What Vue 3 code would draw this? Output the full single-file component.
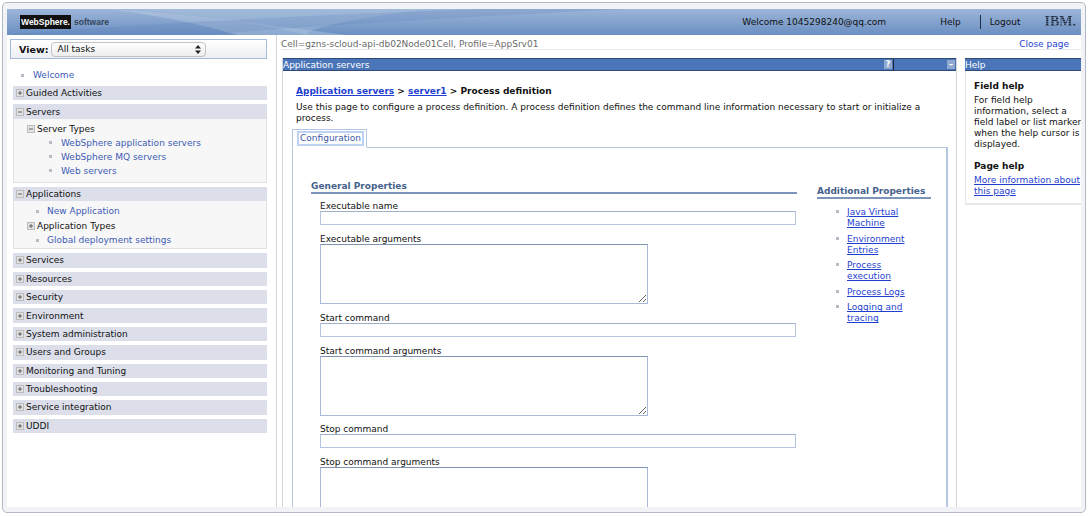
<template>
  <div class="frame">
    <div class="window">
      <header class="banner">
        <svg class="swoosh" width="1074" height="26" viewBox="0 0 1074 26" preserveAspectRatio="none">
          <path d="M100 0 C190 4 270 18 340 26 L230 26 C190 14 150 6 100 0Z" fill="#c3d3e8" opacity=".38" />
          <path d="M120 0 L420 0 C360 8 300 18 300 26 C250 14 180 4 120 0Z" fill="#a9c0de" opacity=".45" />
          <path d="M0 26 C120 16 260 8 470 0 L620 0 C420 10 260 20 200 26Z" fill="#5a80b8" opacity=".22" />
        </svg>
        <div class="brand">
          <span class="brand-box">WebSphere.</span>
          <span class="brand-sub">software</span>
        </div>
        <div class="banner-right">
          <span class="welcome">Welcome 1045298240@qq.com</span>
          <span class="help-link">Help</span>
          <span class="logout">Logout</span>
          <span class="ibm">IBM.</span>
        </div>
      </header>

      <div class="body">
        <aside class="sidebar">
          <div class="view-box">
            <label class="view-label">View:</label>
            <div class="select-wrap">
              <select class="view-select"><option>All tasks</option></select>
              <svg class="select-arrows" width="6" height="9" viewBox="0 0 6 9">
                <path d="M3 0 L6 3.5 H0Z M3 9 L6 5.5 H0Z" fill="#222" />
              </svg>
            </div>
          </div>

          <div class="welcome-row"><span class="bullet"></span><a class="nav-link">Welcome</a></div>

          <nav class="nav">
            <section v-for="group in navGroups" :key="group.title" class="group">
              <div class="group-head">
                <svg class="toggle" width="8" height="8" viewBox="0 0 8 8">
                  <rect x=".5" y=".5" width="7" height="7" fill="#e2e2e2" stroke="#bcbcbc" />
                  <path :d="group.items ? 'M2 4H6' : 'M2 4H6M4 2V6'" stroke="#444" stroke-width=".8" />
                </svg>
                {{ group.title }}
              </div>
              <div v-if="group.items" class="group-body" :class="group.bodyClass">
                <div v-for="item in group.items" :key="item.label" class="nav-item" :class="item.kind">
                  <svg v-if="item.kind !== 'link' && item.kind !== 'sublink'" class="toggle" width="8" height="8" viewBox="0 0 8 8">
                    <rect x=".5" y=".5" width="7" height="7" fill="#e2e2e2" stroke="#bcbcbc" />
                    <path :d="item.kind === 'open' ? 'M2 4H6' : 'M2 4H6M4 2V6'" stroke="#444" stroke-width=".8" />
                  </svg>
                  <span v-else class="bullet"></span>
                  <a v-if="item.kind === 'link' || item.kind === 'sublink'" class="nav-link">{{ item.label }}</a>
                  <span v-else>{{ item.label }}</span>
                </div>
              </div>
            </section>
          </nav>
        </aside>

        <main class="main">
          <div class="context-bar">
            <span>Cell=gzns-scloud-api-db02Node01Cell, Profile=AppSrv01</span>
            <a class="close-page">Close page</a>
          </div>

          <div class="columns">
            <section class="portlet">
              <div class="portlet-title">
                <span class="portlet-name">Application servers</span>
                <div class="portlet-icons">
                  <span class="mini-btn">?</span>
                  <span class="title-rule"></span>
                  <span class="mini-btn">–</span>
                </div>
              </div>
              <div class="portlet-body">
                <h1 class="crumbs">
                  <a>Application servers</a> &gt; <a>server1</a> &gt; Process definition
                </h1>
                <p class="intro">
                  Use this page to configure a process definition. A process definition defines the command line information necessary to start or initialize a process.
                </p>
                <div class="tabs"><div class="tab"><span class="tab-focus">Configuration</span></div></div>
                <div class="tab-panel">
                  <div class="general">
                    <h2 class="section-title">General Properties</h2>
                    <div class="fields">
                      <template v-for="field in fields" :key="field.label">
                        <label class="field-label">{{ field.label }}</label>
                        <textarea v-if="field.area" class="field-area"></textarea>
                        <input v-else class="field-input" type="text" />
                      </template>
                    </div>
                  </div>
                  <div class="additional">
                    <h2 class="section-title">Additional Properties</h2>
                    <ul class="prop-list">
                      <li v-for="prop in props" :key="prop"><a>{{ prop }}</a></li>
                    </ul>
                  </div>
                </div>
              </div>
            </section>

            <aside class="help-col">
              <div class="help-title">Help</div>
              <div class="help-box">
                <h3>Field help</h3>
                <p>For field help information, select a field label or list marker when the help cursor is displayed.</p>
                <h3 class="page-help">Page help</h3>
                <a>More information about this page</a>
              </div>
            </aside>
          </div>
        </main>
      </div>
    </div>
  </div>
</template>

<script setup>
const navGroups = [
  { title: "Guided Activities" },
  {
    title: "Servers",
    bodyClass: "servers-body",
    items: [
      { label: "Server Types", kind: "open" },
      { label: "WebSphere application servers", kind: "link" },
      { label: "WebSphere MQ servers", kind: "link" },
      { label: "Web servers", kind: "link" },
    ],
  },
  {
    title: "Applications",
    bodyClass: "apps-body",
    items: [
      { label: "New Application", kind: "sublink" },
      { label: "Application Types", kind: "closed" },
      { label: "Global deployment settings", kind: "sublink" },
    ],
  },
  { title: "Services" },
  { title: "Resources" },
  { title: "Security" },
  { title: "Environment" },
  { title: "System administration" },
  { title: "Users and Groups" },
  { title: "Monitoring and Tuning" },
  { title: "Troubleshooting" },
  { title: "Service integration" },
  { title: "UDDI" },
];

const fields = [
  { label: "Executable name" },
  { label: "Executable arguments", area: true },
  { label: "Start command" },
  { label: "Start command arguments", area: true },
  { label: "Stop command" },
  { label: "Stop command arguments", area: true },
];

const props = ["Java Virtual Machine", "Environment Entries", "Process execution", "Process Logs", "Logging and tracing"];
</script>

<style>
html,
body {
  margin: 0;
  background: #fff;
  overflow: hidden;
}
</style>

<style scoped>
.frame {
  box-sizing: border-box;
  width: 1084px;
  height: 511px;
  margin: 2px 0 0 2px;
  padding: 6px 4px 5px;
  background: #f2f3f6;
  border: 1px solid #b2b7c6;
  border-radius: 5px;
  font-family: "DejaVu Sans", Verdana, sans-serif;
  font-size: 9px;
  color: #111;
}
.window {
  display: flex;
  flex-direction: column;
  height: 100%;
  background: #fff;
  overflow: hidden;
}
.banner {
  position: relative;
  flex: none;
  display: flex;
  align-items: center;
  justify-content: space-between;
  height: 26px;
  background: linear-gradient(#9db5d8, #6a8fc2);
  overflow: hidden;
}
.swoosh {
  position: absolute;
  left: 0;
  top: 0;
}
.brand {
  position: relative;
  display: flex;
  align-items: center;
  gap: 3px;
  margin-left: 13px;
}
.brand-box {
  width: 51px;
  height: 14px;
  background: #111;
  color: #fff;
  font: bold 8.5px/14px "Liberation Sans", Arial, sans-serif;
  text-align: center;
}
.brand-sub {
  font: bold 8.5px "Liberation Sans", Arial, sans-serif;
  color: #36455c;
}
.banner-right {
  position: relative;
  display: flex;
  align-items: center;
  margin-right: 5px;
}
.welcome {
  margin-right: 54px;
}
.help-link {
  margin-right: 19px;
}
.logout {
  padding-left: 9px;
  border-left: 1px solid #1d2f4d;
  line-height: 14px;
  margin-right: 24px;
}
.ibm {
  font: bold 14px "Liberation Serif", "Times New Roman", serif;
  background: repeating-linear-gradient(#222c3a 0 1px, #4f6485 1px 2px);
  -webkit-background-clip: text;
  background-clip: text;
  color: transparent;
}
.body {
  flex: 1;
  min-height: 0;
  display: flex;
}
.sidebar {
  flex: none;
  box-sizing: border-box;
  width: 270px;
  padding: 4px 9px 0 3px;
  border-right: 1px solid #d6d6d6;
}
.view-box {
  box-sizing: border-box;
  display: flex;
  align-items: center;
  gap: 3px;
  height: 20px;
  padding-left: 8px;
  border: 1px solid #a6bbdb;
  background: linear-gradient(#fff, #eceef2);
}
.view-label {
  font-weight: bold;
  font-size: 9.5px;
}
.select-wrap {
  position: relative;
  display: flex;
}
.view-select {
  box-sizing: border-box;
  width: 155px;
  height: 15px;
  padding: 0 5px;
  appearance: none;
  border: 1px solid #c2c2c2;
  border-radius: 4px;
  background: linear-gradient(#fff, #ececec);
  font: 9px "DejaVu Sans", Verdana, sans-serif;
  color: #111;
}
.select-arrows {
  position: absolute;
  right: 5px;
  top: 3px;
}
.welcome-row {
  display: flex;
  align-items: center;
  height: 14px;
  margin: 9px 0 4px 11px;
}
.bullet {
  flex: none;
  width: 3px;
  height: 3px;
  margin-right: 9px;
  background: #b8bcc4;
}
.nav-link {
  color: #3e5bb5;
}
.nav {
  margin-left: 3px;
}
.group {
  margin-bottom: 4px;
}
.group-head {
  display: flex;
  align-items: center;
  gap: 2px;
  box-sizing: border-box;
  height: 14.4px;
  padding-left: 3px;
  background: #dcdfea;
  color: #111;
}
.group-body {
  box-sizing: border-box;
  background: #f7f7f7;
  border: 1px solid #e2e2e2;
  border-top: 0;
}
.servers-body {
  height: 64px;
  padding-top: 3px;
}
.apps-body {
  height: 48px;
  padding-top: 3px;
}
.apps-body .nav-item {
  height: 14.5px;
}
.nav-item {
  display: flex;
  align-items: center;
  height: 14px;
  line-height: 14px;
}
.nav-item.open,
.nav-item.closed {
  gap: 2px;
  padding-left: 13px;
}
.nav-item.link {
  padding-left: 35px;
}
.nav-item.sublink {
  padding-left: 22px;
}
.nav-item.sublink .bullet {
  margin-right: 8px;
}
.main {
  flex: 1;
  min-width: 0;
  display: flex;
  flex-direction: column;
  padding-left: 4px;
}
.context-bar {
  flex: none;
  display: flex;
  justify-content: space-between;
  box-sizing: border-box;
  height: 15px;
  padding-top: 3px;
  border-bottom: 1px solid #e8e8e8;
  color: #6a6a6a;
  line-height: 12px;
}
.close-page {
  margin-right: 12px;
  color: #1f3fd0;
}
.columns {
  flex: 1;
  min-height: 0;
  display: flex;
  padding-top: 8px;
}
.portlet {
  flex: none;
  box-sizing: border-box;
  width: 675px;
  margin-left: 1px;
  border-left: 1px solid #d6d6d6;
  border-right: 1px solid #d6d6d6;
}
.portlet-title,
.help-title {
  display: flex;
  align-items: center;
  justify-content: space-between;
  box-sizing: border-box;
  height: 13px;
  background: #4a75b8;
  border-top: 1px solid #2f4a75;
  border-bottom: 1px solid #2f4a75;
  color: #fff;
  line-height: 11px;
}
.portlet-name {
  margin-top: 2px;
}
.portlet-icons {
  display: flex;
  align-items: center;
  height: 100%;
  padding-right: 1px;
}
.mini-btn {
  width: 8px;
  height: 9px;
  background: #8fa9d0;
  color: #fff;
  font-size: 8px;
  font-weight: bold;
  line-height: 9px;
  text-align: center;
}
.title-rule {
  width: 54px;
  height: 100%;
  margin-left: 1px;
  box-sizing: border-box;
  border-left: 1px solid #223;
}
.portlet-body {
  padding: 14px 0 0 13px;
}
.crumbs {
  margin: 0 0 4px;
  font-size: 9px;
  line-height: 13px;
  font-weight: bold;
}
.crumbs a,
.prop-list a,
.help-box a {
  color: #1f3fd0;
  text-decoration: underline;
}
.intro {
  width: 640px;
  margin: 0;
  line-height: 11px;
}
.tabs {
  display: flex;
  margin: 5px 0 0 -4px;
}
.tab {
  display: flex;
  align-items: center;
  box-sizing: border-box;
  width: 75px;
  height: 19px;
  margin-bottom: -1px;
  padding-left: 6px;
  background: #fff;
  border: 1px solid #b5c6e0;
  border-bottom-color: #fff;
  z-index: 1;
}
.tab-focus {
  padding: 0 1px;
  outline: 2px solid #bdd2f0;
  color: #3d5aa8;
  line-height: 11px;
}
.tab-panel {
  display: flex;
  box-sizing: border-box;
  width: 656px;
  height: 400px;
  margin-left: -4px;
  padding: 33px 0 0 18px;
  border: 1px solid #b5c6e0;
  border-right-width: 2px;
}
.general {
  width: 486px;
}
.section-title {
  margin: 0;
  font-size: 9px;
  line-height: 11px;
  font-weight: bold;
  color: #46618c;
  border-bottom: 2px solid #7b94b8;
}
.fields {
  display: flex;
  flex-direction: column;
  align-items: flex-start;
  padding: 7px 0 0 9px;
}
.field-label {
  line-height: 11px;
  margin-bottom: -1px;
}
.field-input {
  box-sizing: border-box;
  width: 476px;
  height: 14px;
  margin: 0 0 9px;
  padding: 0;
  border: 1px solid #b5c6e0;
  border-top-color: #9fb0cc;
}
.field-area {
  box-sizing: border-box;
  display: block;
  width: 328px;
  height: 60px;
  margin: 0 0 8.5px;
  padding: 0;
  border: 1px solid #a9b9d4;
  border-top-color: #7f93b5;
}
.additional {
  width: 114px;
  margin: 5px 0 0 20px;
}
.prop-list {
  margin: 4px 0 0;
  padding: 4px 19px 0 30px;
  list-style: none;
}
.prop-list li {
  position: relative;
  margin-bottom: 4.6px;
  line-height: 11px;
}
.prop-list li::before {
  content: "";
  position: absolute;
  left: -11px;
  top: 3px;
  width: 3px;
  height: 3px;
  background: #b8bcc4;
}
.help-col {
  flex: none;
  width: 116px;
  margin-left: 8px;
}
.help-title {
  padding-top: 2px;
  padding-left: 0;
}
.help-box {
  box-sizing: border-box;
  width: 116px;
  height: 134px;
  padding: 10px 0 0 8px;
  border-left: 1px solid #e6e6e6;
  border-bottom: 2px solid #e6e6e6;
  line-height: 11px;
}
.help-box h3 {
  margin: 0 0 3px;
  font-size: 9px;
  line-height: 11px;
  font-weight: bold;
}
.help-box p {
  margin: 0 -2px 0 0;
}
.help-box .page-help {
  margin-top: 11px;
}
.help-box a {
  display: block;
  line-height: 11px;
}
</style>
